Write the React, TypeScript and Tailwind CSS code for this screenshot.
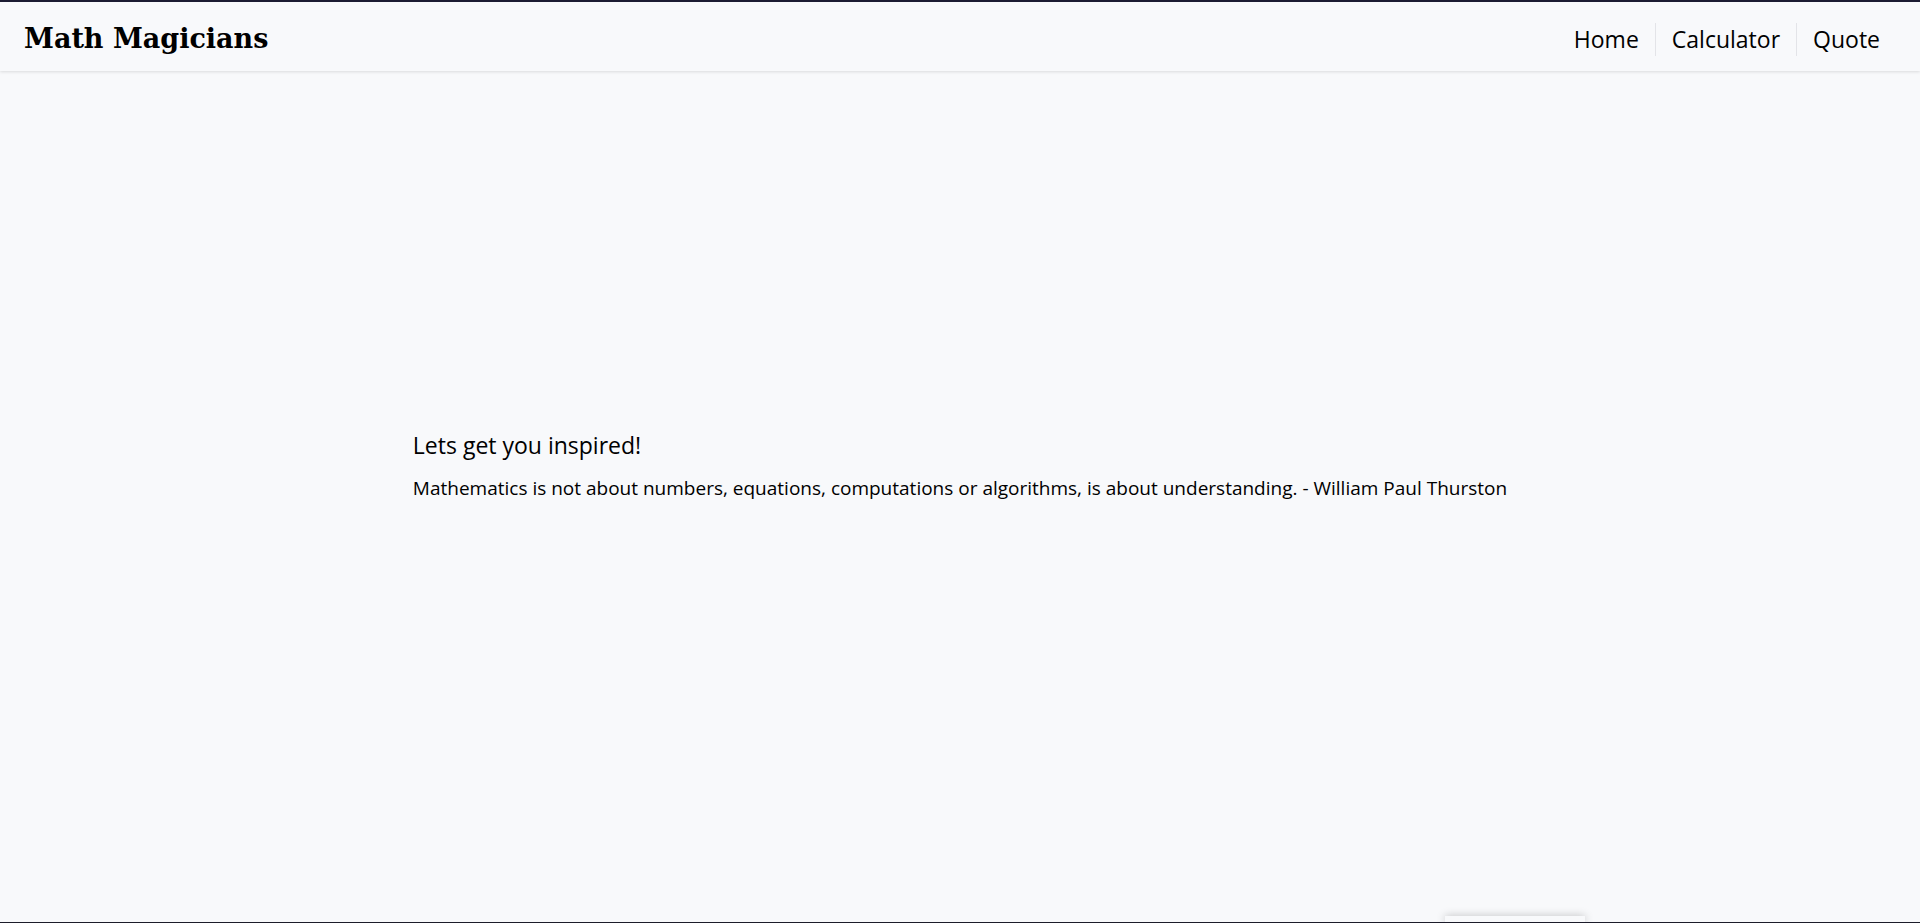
const NavLink = ({ label, last }: { label: string; last?: boolean }) => (
  <li className={last ? "px-4" : "px-4 border-r border-[#e3e4e8]"}>
    <a href="#" className="text-[23px] leading-[33px] text-black">
      {label}
    </a>
  </li>
);

const App = () => {
  return (
    <div className="h-[923px] flex flex-col bg-[#f8f9fb] border-t-2 border-[#1c1c33] border-b border-b-[#1c1c2a] overflow-hidden relative font-['Open_Sans',sans-serif]">
      <header className="h-[69px] flex items-center justify-between pl-6 pr-6 pt-[5px] shadow-[0_1px_3px_rgba(0,0,0,0.12)] bg-[#f8f9fb]">
        <h1 className="font-['DejaVu_Serif',serif] font-bold text-[27px] text-black">Math Magicians</h1>
        <ul className="flex items-center">
          <NavLink label="Home" />
          <NavLink label="Calculator" />
          <NavLink label="Quote" last />
        </ul>
      </header>
      <main className="flex-1 flex flex-col items-center justify-center pb-[62px]">
        <div className="flex flex-col gap-[14px] text-black">
          <h2 className="text-[23px] leading-[31px]">Lets get you inspired!</h2>
          <p className="text-[19px] leading-[27px]">
            Mathematics is not about numbers, equations, computations or algorithms, is about understanding. - William Paul
            Thurston
          </p>
        </div>
      </main>
      <div className="absolute bottom-0 left-[1445px] w-[140px] h-[6px] shadow-[0_0_8px_rgba(0,0,0,0.25)]" />
    </div>
  );
};

export default App;
